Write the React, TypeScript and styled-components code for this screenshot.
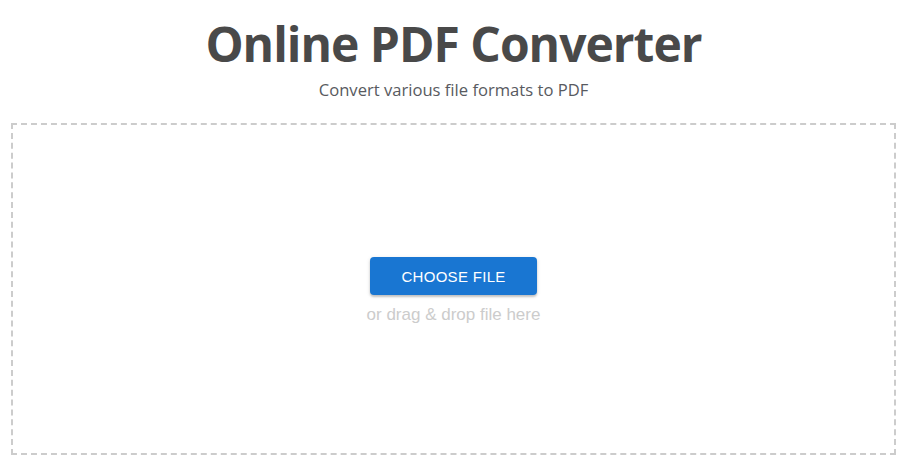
import React from "react";
import styled, { createGlobalStyle } from "styled-components";

const GlobalStyle = createGlobalStyle`
  html, body {
    margin: 0;
    padding: 0;
    background: #ffffff;
  }
  body {
    font-family: "Open Sans", "Liberation Sans", sans-serif;
  }
`;

const Page = styled.div`
  display: flex;
  flex-direction: column;
  align-items: center;
  padding: 11px 7px 0 11px;
`;

const Title = styled.h1`
  margin: 0;
  font-family: "Open Sans", sans-serif;
  font-weight: 700;
  font-size: 48px;
  line-height: normal;
  letter-spacing: -1px;
  color: #494949;
`;

const Subtitle = styled.p`
  margin: 2px 0 0;
  font-family: "Open Sans", sans-serif;
  font-size: 16.6px;
  line-height: 23px;
  color: #585a60;
`;

const DropZone = styled.div`
  box-sizing: border-box;
  margin-top: 22px;
  width: 100%;
  height: 332px;
  padding-top: 4px;
  border: 2px dashed #cccccc;
  display: flex;
  flex-direction: column;
  align-items: center;
  justify-content: center;
  gap: 10px;
`;

const ChooseButton = styled.button`
  width: 167px;
  height: 38px;
  border: none;
  border-radius: 4px;
  background: #1976d2;
  color: #ffffff;
  font-family: "Liberation Sans", Arial, sans-serif;
  font-size: 15px;
  letter-spacing: 0.3px;
  box-shadow: 0 2px 2px rgba(0, 0, 0, 0.18), 0 1px 4px rgba(0, 0, 0, 0.12);
  cursor: pointer;
`;

const Hint = styled.span`
  font-family: "Liberation Sans", Arial, sans-serif;
  font-size: 17px;
  line-height: 20px;
  color: #cccccc;
`;

export default function App() {
  return (
    <>
      <GlobalStyle />
      <Page>
        <Title>Online PDF Converter</Title>
        <Subtitle>Convert various file formats to PDF</Subtitle>
        <DropZone>
          <ChooseButton type="button">CHOOSE FILE</ChooseButton>
          <Hint>or drag &amp; drop file here</Hint>
        </DropZone>
      </Page>
    </>
  );
}
